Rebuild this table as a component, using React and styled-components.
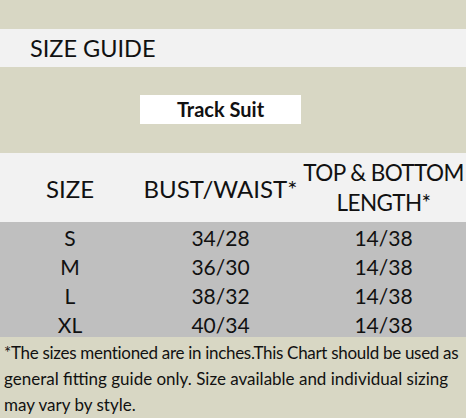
import React from "react";
import styled, { createGlobalStyle } from "styled-components";

const GlobalStyle = createGlobalStyle`
  html, body {
    margin: 0;
    padding: 0;
    background: #ffffff;
  }
  body {
    font-family: Lato, "Liberation Sans", sans-serif;
    color: #111111;
  }
`;

const sizes = [
  { size: "S", bust: "34/28", length: "14/38" },
  { size: "M", bust: "36/30", length: "14/38" },
  { size: "L", bust: "38/32", length: "14/38" },
  { size: "XL", bust: "40/34", length: "14/38" },
];

const App = () => {
  return (
    <>
      <GlobalStyle />
      <Sheet>
        <TopBand />
        <TitleBar>SIZE GUIDE</TitleBar>
        <ProductBand>
          <span />
          <ProductLabel>Track Suit</ProductLabel>
        </ProductBand>
        <HeaderRow>
          <HeadCell>SIZE</HeadCell>
          <HeadCell>BUST/WAIST*</HeadCell>
          <HeadCell $tight>
            TOP &amp; BOTTOM
            <br />
            LENGTH*
          </HeadCell>
        </HeaderRow>
        <DataBlock>
          {sizes.map((row) => (
            <DataRow key={row.size}>
              <DataCell>{row.size}</DataCell>
              <DataCell>{row.bust}</DataCell>
              <DataCell>{row.length}</DataCell>
            </DataRow>
          ))}
        </DataBlock>
        <Footnote>
          <FootLine $spacing="-0.3px">
            *The sizes mentioned are in inches.This Chart should be used as
          </FootLine>
          <FootLine>
            general fitting guide only. Size available and individual sizing
          </FootLine>
          <FootLine>may vary by style.</FootLine>
        </Footnote>
      </Sheet>
    </>
  );
};

export default App;

const Sheet = styled.div`
  width: 466px;
  height: 418px;
  overflow: hidden;
  display: flex;
  flex-direction: column;
`;

const TopBand = styled.div`
  height: 29px;
  background: #d8d7c4;
`;

const TitleBar = styled.div`
  height: 38px;
  background: #f2f2f2;
  padding-left: 30px;
  font-size: 23.5px;
  line-height: 38px;
  box-sizing: border-box;
`;

const ProductBand = styled.div`
  height: 86px;
  background: #d8d7c4;
  display: grid;
  grid-template-columns: 140px 161px 165px;
  padding-top: 28px;
  box-sizing: border-box;
  align-items: start;
`;

const ProductLabel = styled.div`
  height: 29px;
  background: #ffffff;
  font-weight: 700;
  font-size: 20px;
  line-height: 29px;
  text-align: center;
`;

const HeaderRow = styled.div`
  height: 69px;
  background: #f2f2f2;
  display: grid;
  grid-template-columns: 140px 161px 165px;
  align-items: center;
`;

const HeadCell = styled.div`
  text-align: center;
  font-size: ${(p) => (p.$tight ? "22.5px" : "24px")};
  letter-spacing: ${(p) => (p.$tight ? "-0.6px" : "0")};
  line-height: 30px;
  white-space: nowrap;
  padding-top: ${(p) => (p.$tight ? "0" : "3px")};
`;

const DataBlock = styled.div`
  height: 115px;
  background: #bfbfbf;
  padding-top: 1px;
  box-sizing: border-box;
`;

const DataRow = styled.div`
  display: grid;
  grid-template-columns: 140px 161px 165px;
  height: 29px;
  align-items: center;
`;

const DataCell = styled.div`
  text-align: center;
  font-size: 21px;
  line-height: 29px;
`;

const Footnote = styled.div`
  flex: 1;
  background: #d8d7c4;
  padding: 3px 0 0 4px;
  font-size: 17px;
  line-height: 26px;
  white-space: nowrap;
`;

const FootLine = styled.div`
  letter-spacing: ${(p) => p.$spacing || "0"};
`;
